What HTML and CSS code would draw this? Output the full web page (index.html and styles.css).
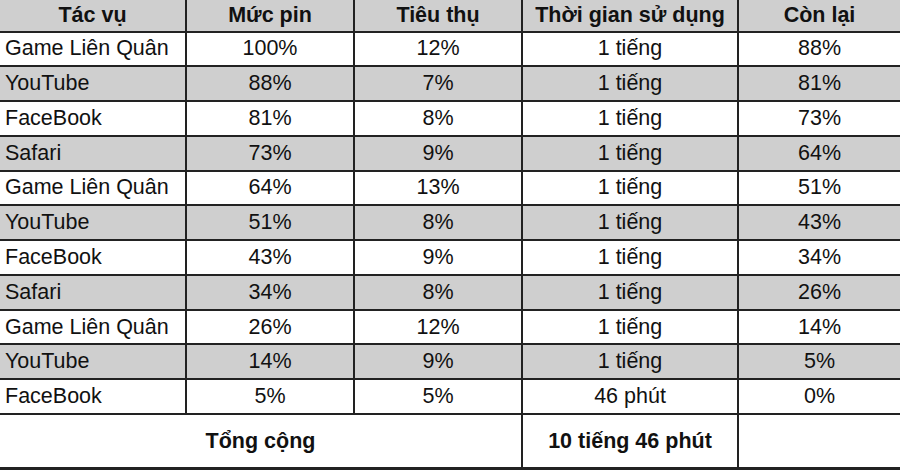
FILE: index.html
```html
<!DOCTYPE html>
<html lang="vi">
<head>
<meta charset="utf-8">
<title>Bảng thời gian sử dụng pin</title>
<link rel="stylesheet" href="styles.css">
</head>
<body>
<div class="sheet">
  <div class="cell head">Tác vụ</div>
  <div class="cell head">Mức pin</div>
  <div class="cell head">Tiêu thụ</div>
  <div class="cell head">Thời gian sử dụng</div>
  <div class="cell head">Còn lại</div>

  <div class="cell name">Game Liên Quân</div><div class="cell">100%</div><div class="cell">12%</div><div class="cell">1 tiếng</div><div class="cell">88%</div>
  <div class="cell name alt">YouTube</div><div class="cell alt">88%</div><div class="cell alt">7%</div><div class="cell alt">1 tiếng</div><div class="cell alt">81%</div>
  <div class="cell name">FaceBook</div><div class="cell">81%</div><div class="cell">8%</div><div class="cell">1 tiếng</div><div class="cell">73%</div>
  <div class="cell name alt">Safari</div><div class="cell alt">73%</div><div class="cell alt">9%</div><div class="cell alt">1 tiếng</div><div class="cell alt">64%</div>
  <div class="cell name">Game Liên Quân</div><div class="cell">64%</div><div class="cell">13%</div><div class="cell">1 tiếng</div><div class="cell">51%</div>
  <div class="cell name alt">YouTube</div><div class="cell alt">51%</div><div class="cell alt">8%</div><div class="cell alt">1 tiếng</div><div class="cell alt">43%</div>
  <div class="cell name">FaceBook</div><div class="cell">43%</div><div class="cell">9%</div><div class="cell">1 tiếng</div><div class="cell">34%</div>
  <div class="cell name alt">Safari</div><div class="cell alt">34%</div><div class="cell alt">8%</div><div class="cell alt">1 tiếng</div><div class="cell alt">26%</div>
  <div class="cell name">Game Liên Quân</div><div class="cell">26%</div><div class="cell">12%</div><div class="cell">1 tiếng</div><div class="cell">14%</div>
  <div class="cell name alt">YouTube</div><div class="cell alt">14%</div><div class="cell alt">9%</div><div class="cell alt">1 tiếng</div><div class="cell alt">5%</div>
  <div class="cell name">FaceBook</div><div class="cell">5%</div><div class="cell">5%</div><div class="cell">46 phút</div><div class="cell">0%</div>

  <div class="cell total span3">Tổng cộng</div>
  <div class="cell total">10 tiếng 46 phút</div>
  <div class="cell total"></div>
</div>
</body>
</html>
```
FILE: styles.css
```css
html, body {
  margin: 0;
  padding: 0;
  background: #ffffff;
  overflow: hidden;
}

.sheet {
  width: 900px;
  height: 470px;
  box-sizing: border-box;
  display: grid;
  grid-template-columns: 185px 166px 166px 214px 1fr;
  grid-template-rows: 30.5px repeat(11, 32.77px) 52.5px;
  gap: 2px;
  background: #222222;
  border-bottom: 2.5px solid #222222;
  font-family: "Liberation Sans", Arial, sans-serif;
  font-size: 21.5px;
  color: #111111;
}

.cell {
  background: #ffffff;
  display: flex;
  align-items: center;
  justify-content: center;
  white-space: nowrap;
  overflow: hidden;
}

.head {
  background: #cfcfcf;
  font-weight: bold;
}

.alt {
  background: #cfcfcf;
}

.name {
  justify-content: flex-start;
  padding-left: 5px;
}

.total {
  font-weight: bold;
}

.span3 {
  grid-column: span 3;
}
```
